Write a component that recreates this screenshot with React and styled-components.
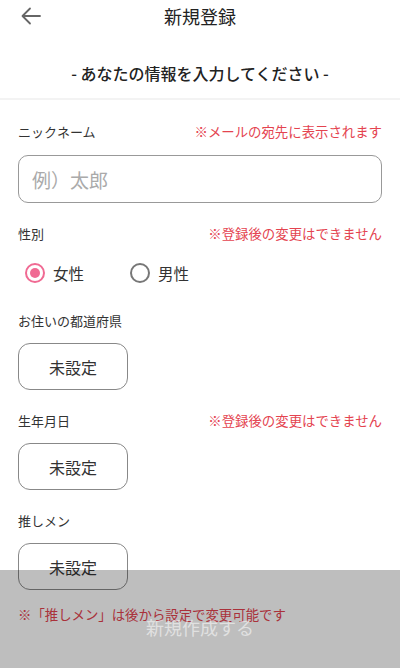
import React, { useState } from "react";
import styled, { createGlobalStyle } from "styled-components";

const Global = createGlobalStyle`
  html, body { margin: 0; padding: 0; background: #fff; }
  body { font-family: "Noto Sans CJK JP", "Noto Sans", sans-serif; color: #333; }
  * { box-sizing: border-box; }
`;

const Page = styled.div`
  width: 400px;
  height: 668px;
  overflow: hidden;
  background: #fff;
  position: relative;
`;

const Header = styled.header`
  display: grid;
  grid-template-columns: 62px 1fr 62px;
  align-items: center;
  height: 32px;
`;

const BackButton = styled.button`
  border: 0;
  background: none;
  padding: 0;
  display: flex;
  align-items: center;
  justify-content: center;
  height: 32px;
  color: #666;
`;

const Title = styled.h1`
  margin: 0;
  text-align: center;
  font-size: 18px;
  font-weight: 400;
  color: #222;
  line-height: 32px;
`;

const Lead = styled.div`
  padding: 30px 0 14px;
  text-align: center;
  font-size: 16px;
  font-weight: 500;
  line-height: 22px;
  color: #222;
  border-bottom: 2px solid #f3f3f3;
`;

const Form = styled.div`
  padding: 21px 18px 0;
  display: flex;
  flex-direction: column;
  gap: 20px;
`;

const Field = styled.div`
  display: flex;
  flex-direction: column;
`;

const LabelRow = styled.div`
  display: flex;
  justify-content: space-between;
  align-items: center;
  height: 20px;
  margin-bottom: ${(p) => p.$gap || 13}px;
`;

const Label = styled.span`
  font-size: 13px;
  color: #333;
`;

const Note = styled.span`
  font-size: 13.4px;
  color: #e4434f;
`;

const Input = styled.input`
  width: 100%;
  height: 48px;
  border: 1px solid #999;
  border-radius: 10px;
  padding: 0 13px;
  font-family: inherit;
  font-size: 19px;
  color: #333;
  outline: none;
  &::placeholder { color: #aaa; }
`;

const RadioRow = styled.div`
  display: flex;
  align-items: center;
  height: 34px;
  padding-left: 7px;
  gap: 46px;
`;

const RadioLabel = styled.label`
  display: flex;
  align-items: center;
  gap: 8px;
  font-size: 15.5px;
  color: #333;
  cursor: pointer;
`;

const RadioCircle = styled.span`
  width: 20px;
  height: 20px;
  border-radius: 50%;
  border: 2px solid ${(p) => (p.$on ? "#f06a93" : "#777")};
  display: flex;
  align-items: center;
  justify-content: center;
  &::after {
    content: "";
    width: 10px;
    height: 10px;
    border-radius: 50%;
    background: ${(p) => (p.$on ? "#f06a93" : "transparent")};
  }
`;

const SelectButton = styled.button`
  width: 110px;
  height: 47px;
  border: 1px solid #888;
  border-radius: 12px;
  background: #fff;
  font-family: inherit;
  font-size: 16px;
  color: #333;
`;

const FootNote = styled.p`
  margin: 14px 0 0;
  font-size: 13.4px;
  line-height: 20px;
  color: #e4434f;
`;

const SubmitBar = styled.div`
  position: absolute;
  left: 0;
  right: 0;
  bottom: 0;
  height: 98px;
  background: rgba(0, 0, 0, 0.255);
  display: flex;
  justify-content: center;
  padding-top: 46px;
  font-size: 18px;
  line-height: 22px;
  color: rgba(255, 255, 255, 0.55);
`;

export default function App() {
  const [gender, setGender] = useState("female");
  return (
    <Page>
      <Global />
      <Header>
        <BackButton aria-label="戻る">
          <svg width="20" height="18" viewBox="0 0 20 18" fill="none" stroke="#666" strokeWidth="1.8" strokeLinecap="round" strokeLinejoin="round">
            <path d="M19 9H2" />
            <path d="M9 1.5L1.5 9L9 16.5" />
          </svg>
        </BackButton>
        <Title>新規登録</Title>
        <span />
      </Header>
      <Lead>- あなたの情報を入力してください -</Lead>
      <Form>
        <Field>
          <LabelRow $gap={14}>
            <Label>ニックネーム</Label>
            <Note>※メールの宛先に表示されます</Note>
          </LabelRow>
          <Input placeholder="例）太郎" />
        </Field>
        <Field>
          <LabelRow>
            <Label>性別</Label>
            <Note>※登録後の変更はできません</Note>
          </LabelRow>
          <RadioRow>
            <RadioLabel onClick={() => setGender("female")}>
              <RadioCircle $on={gender === "female"} />
              女性
            </RadioLabel>
            <RadioLabel onClick={() => setGender("male")}>
              <RadioCircle $on={gender === "male"} />
              男性
            </RadioLabel>
          </RadioRow>
        </Field>
        <Field>
          <LabelRow>
            <Label>お住いの都道府県</Label>
          </LabelRow>
          <SelectButton>未設定</SelectButton>
        </Field>
        <Field>
          <LabelRow>
            <Label>生年月日</Label>
            <Note>※登録後の変更はできません</Note>
          </LabelRow>
          <SelectButton>未設定</SelectButton>
        </Field>
        <Field>
          <LabelRow>
            <Label>推しメン</Label>
          </LabelRow>
          <SelectButton>未設定</SelectButton>
          <FootNote>※「推しメン」は後から設定で変更可能です</FootNote>
        </Field>
      </Form>
      <SubmitBar>新規作成する</SubmitBar>
    </Page>
  );
}
